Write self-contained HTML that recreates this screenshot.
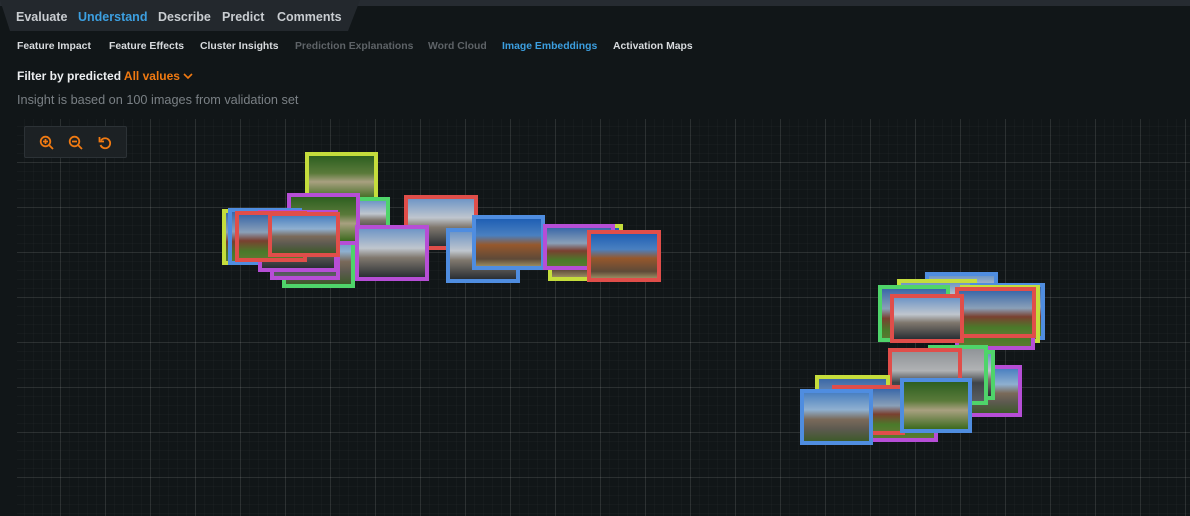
<!DOCTYPE html>
<html><head><meta charset="utf-8"><style>
*{margin:0;padding:0;box-sizing:border-box}
body{width:1190px;height:516px;overflow:hidden;background:#111618;font-family:"Liberation Sans",sans-serif;position:relative}
.top{position:absolute;left:0;top:0;width:1190px;height:6px;background:#262b31}
.tabs{position:absolute;left:0;top:0;width:360px;height:31px;background:#23282d;clip-path:polygon(0 0,360px 0,348px 31px,10px 31px,0 0)}
.tabs span{position:absolute;top:10px;font-size:12.5px;font-weight:bold;color:#c9cdd1}
.sub span{position:absolute;top:41px;font-size:10.4px;font-weight:bold;color:#d8dbde}
.t{position:absolute;white-space:nowrap}
.grid{position:absolute;left:17px;top:119px;width:1173px;height:397px;
background-image:
linear-gradient(to right,rgba(255,255,255,.09) 1px,transparent 1px),
linear-gradient(to bottom,rgba(255,255,255,.09) 1px,transparent 1px),
linear-gradient(to right,rgba(255,255,255,.018) 1px,transparent 1px),
linear-gradient(to bottom,rgba(255,255,255,.018) 1px,transparent 1px);
background-size:45px 45px,45px 45px,9px 9px,9px 9px;
background-position:43px 43px,0 43px,43px 43px,0 43px;}
.panel{position:absolute;left:24px;top:126px;width:103px;height:32px;background:#1c2124;border:1px solid #2c3236;border-radius:2px}
.b{position:absolute;border:4px solid;width:74px;height:52px}
.L{border-color:#c5dd3c}.P{border-color:#b64ed6}.R{border-color:#e04e4a}.B{border-color:#4f8de0}.G{border-color:#4fd46a}
.p1{background:linear-gradient(#4a80c0 0,#8fb0d0 35%,#7a6a5a 55%,#5d5a50 75%,#3e5a2a 100%)}
.p2{background:linear-gradient(#2d5f20 0,#5a7a3a 40%,#a8a080 60%,#3c6a1e 100%)}
.p3{background:linear-gradient(#6f96c6 0,#bfc6ce 40%,#80786e 60%,#2a2f34 100%)}
.p4{background:linear-gradient(#1f5fb4 0,#4a80c0 35%,#96582c 55%,#5e4a38 85%,#988a60 100%)}
.p5{background:linear-gradient(#909498 0,#b0b2b4 40%,#404448 65%,#5a5e60 100%)}
.p6{background:linear-gradient(#3a68a8 0,#8aa0b8 40%,#7a4030 60%,#4a7a2a 85%,#5a7a30 100%)}
</style></head><body>
<div class="top"></div>
<div class="tabs">
<span style="left:16px">Evaluate</span>
<span style="left:78px;color:#3c9fe0">Understand</span>
<span style="left:158px">Describe</span>
<span style="left:222px">Predict</span>
<span style="left:277px">Comments</span>
</div>
<div class="sub">
<span style="left:17px">Feature Impact</span>
<span style="left:109px">Feature Effects</span>
<span style="left:200px">Cluster Insights</span>
<span style="left:295px;color:#5e6367">Prediction Explanations</span>
<span style="left:428px;color:#5e6367">Word Cloud</span>
<span style="left:502px;color:#3c9fe0">Image Embeddings</span>
<span style="left:613px">Activation Maps</span>
</div>
<div class="t" style="left:17px;top:69px;font-size:12px;font-weight:bold;color:#eceef0">Filter by predicted <span style="color:#f07a12">All values</span> <svg width="10" height="8" viewBox="0 0 10 8" style="vertical-align:0"><path d="M1 2l4 4 4-4" stroke="#f07a12" stroke-width="1.6" fill="none"/></svg></div>
<div class="t" style="left:17px;top:93px;font-size:12.7px;color:#7a8085">Insight is based on 100 images from validation set</div>
<div class="grid"></div>
<div class="panel">
<svg style="position:absolute;left:14px;top:8px" width="16" height="16" viewBox="0 0 16 16"><circle cx="6.5" cy="6.5" r="4.8" stroke="#f07a12" stroke-width="1.8" fill="none"/><path d="M10 10l4 4M4 6.5h5M6.5 4v5" stroke="#f07a12" stroke-width="1.8"/></svg>
<svg style="position:absolute;left:43px;top:8px" width="16" height="16" viewBox="0 0 16 16"><circle cx="6.5" cy="6.5" r="4.8" stroke="#f07a12" stroke-width="1.8" fill="none"/><path d="M10 10l4 4M4 6.5h5" stroke="#f07a12" stroke-width="1.8"/></svg>
<svg style="position:absolute;left:72px;top:8px" width="16" height="16" viewBox="0 0 16 16"><path d="M4 5.5A5 5 0 1 1 3.5 10" stroke="#f07a12" stroke-width="1.8" fill="none"/><path d="M2.5 2v4.5H7" stroke="#f07a12" stroke-width="1.8" fill="none"/></svg>
</div>

<!-- left cluster -->
<div class="b L p2" style="left:305px;top:152px;width:73px;height:51px"></div>
<div class="b G p1" style="left:282px;top:230px;width:73px;height:58px"></div>
<div class="b G p3" style="left:340px;top:197px;width:50px;height:40px"></div>
<div class="b P p2" style="left:287px;top:193px;width:73px;height:52px"></div>
<div class="b P p5" style="left:270px;top:226px;width:70px;height:54px"></div>
<div class="b L p6" style="left:222px;top:209px;width:74px;height:56px"></div>
<div class="b B p6" style="left:228px;top:208px;width:74px;height:57px"></div>
<div class="b P p3" style="left:258px;top:210px;width:80px;height:62px"></div>
<div class="b R p6" style="left:235px;top:211px;width:72px;height:51px"></div>
<div class="b R p1" style="left:268px;top:212px;width:72px;height:45px"></div>
<div class="b R p3" style="left:404px;top:195px;width:74px;height:55px"></div>
<div class="b P p3" style="left:355px;top:225px;width:74px;height:56px"></div>
<div class="b L p4" style="left:548px;top:224px;width:75px;height:57px"></div>
<div class="b B p3" style="left:446px;top:228px;width:74px;height:55px"></div>
<div class="b B p4" style="left:472px;top:215px;width:73px;height:55px"></div>
<div class="b P p6" style="left:543px;top:224px;width:72px;height:46px"></div>
<div class="b R p4" style="left:587px;top:230px;width:74px;height:52px"></div>

<!-- right cluster -->
<div class="b B p3" style="left:925px;top:272px;width:73px;height:40px"></div>
<div class="b L p3" style="left:897px;top:279px;width:80px;height:40px"></div>
<div class="b B p6" style="left:970px;top:283px;width:75px;height:57px"></div>
<div class="b L p6" style="left:960px;top:285px;width:80px;height:58px"></div>
<div class="b P p6" style="left:955px;top:290px;width:80px;height:60px"></div>
<div class="b G p6" style="left:878px;top:285px;width:72px;height:57px"></div>
<div class="b R p6" style="left:955px;top:287px;width:81px;height:51px"></div>
<div class="b R p3" style="left:890px;top:294px;width:74px;height:49px"></div>
<div class="b P p1" style="left:960px;top:365px;width:62px;height:52px"></div>
<div class="b G p3" style="left:935px;top:350px;width:60px;height:50px"></div>
<div class="b G p5" style="left:928px;top:345px;width:60px;height:60px"></div>
<div class="b R p5" style="left:888px;top:348px;width:74px;height:55px"></div>
<div class="b L p6" style="left:815px;top:375px;width:75px;height:65px"></div>
<div class="b P p6" style="left:840px;top:390px;width:98px;height:52px"></div>
<div class="b R p6" style="left:832px;top:385px;width:73px;height:50px"></div>
<div class="b B p2" style="left:900px;top:378px;width:72px;height:55px"></div>
<div class="b B p1" style="left:800px;top:389px;width:73px;height:56px"></div>
</body></html>
